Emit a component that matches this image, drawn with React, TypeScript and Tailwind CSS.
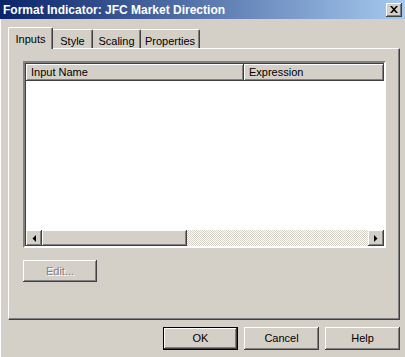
import React from "react";

const raised =
  "shadow-[inset_-1px_-1px_#404040,inset_1px_1px_#ffffff,inset_-2px_-2px_#808080,inset_2px_2px_#d4d0c8]";

type ButtonProps = {
  label: string;
  isDefault?: boolean;
  disabled?: boolean;
  className?: string;
};

const Button: React.FC<ButtonProps> = ({ label, isDefault, disabled, className = "" }) => (
  <div
    className={`flex items-center justify-center bg-[#d4d0c8] ${raised} ${
      isDefault ? "border border-black" : ""
    } ${disabled ? "text-[#808080] [text-shadow:1px_1px_#ffffff]" : "text-black"} ${className}`}
  >
    {label}
  </div>
);

const tabs = [
  { label: "Inputs", width: "w-[45px]", active: true },
  { label: "Style", width: "w-[40px]", active: false },
  { label: "Scaling", width: "w-[48px]", active: false },
  { label: "Properties", width: "w-[59px]", active: false },
];

const Arrow: React.FC<{ dir: "left" | "right" }> = ({ dir }) => (
  <svg width="4" height="7" viewBox="0 0 4 7">
    {dir === "left" ? <polygon points="4,0 4,7 0.5,3.5" fill="#000" /> : <polygon points="0,0 0,7 3.5,3.5" fill="#000" />}
  </svg>
);

const App: React.FC = () => {
  return (
    <div className="w-[405px] h-[357px] bg-[#d4d0c8] flex flex-col overflow-hidden text-[11px] font-['Liberation_Sans',Arial,sans-serif] text-black">
      {/* Title bar */}
      <div className="h-[19px] flex items-center justify-between bg-[linear-gradient(to_right,#0a246a,#a6caf0)] pl-[3px] pr-[3px]">
        <span className="text-white font-bold text-[12px] leading-none">
          Format Indicator: JFC Market Direction
        </span>
        <div className={`w-[16px] h-[14px] bg-[#d4d0c8] flex items-center justify-center ${raised}`}>
          <svg width="8" height="7" viewBox="0 0 8 7">
            <path d="M0 0 L2 0 L4 2.2 L6 0 L8 0 L5 3.5 L8 7 L6 7 L4 4.8 L2 7 L0 7 L3 3.5 Z" fill="#000" />
          </svg>
        </div>
      </div>

      <div className="flex-1 flex flex-col border-l border-white">
        {/* Tabs */}
        <div className="flex items-end h-[21px] mt-[8px] ml-[7px] relative z-10">
          {tabs.map((t) =>
            t.active ? (
              <div
                key={t.label}
                className={`${t.width} h-[22px] -mb-[1px] bg-[#d4d0c8] border-l border-t border-white border-r border-r-[#404040] rounded-t-[2px] shadow-[inset_-1px_0_#808080] flex items-start justify-center pt-[3px]`}
              >
                {t.label}
              </div>
            ) : (
              <div
                key={t.label}
                className={`${t.width} h-[19px] bg-[#d4d0c8] border-t border-white border-r border-r-[#404040] shadow-[inset_-1px_0_#808080] rounded-tr-[2px] flex items-start justify-center pt-[3px]`}
              >
                {t.label}
              </div>
            )
          )}
        </div>

        {/* Tab panel */}
        <div className="ml-[7px] w-[392px] h-[272px] border-l border-t border-white border-r border-b border-r-[#404040] border-b-[#404040] shadow-[inset_-1px_-1px_#808080] pt-[12px] pl-[14px]">
          {/* List view */}
          <div className="w-[363px] h-[187px] flex flex-col border-2 border-t-[#808080] border-l-[#808080] border-r-white border-b-white">
            <div className="flex-1 flex flex-col border-t border-l border-[#404040]">
              <div className="flex h-[17px] shrink-0">
                <div className={`w-[218px] h-full flex items-center pl-[5px] ${raised}`}>Input Name</div>
                <div className={`flex-1 h-full flex items-center pl-[5px] ${raised}`}>Expression</div>
              </div>
              <div className="flex-1 bg-white" />
              <div className="h-[16px] flex shrink-0">
                <div className={`w-[16px] h-full flex items-center justify-center bg-[#d4d0c8] ${raised}`}>
                  <Arrow dir="left" />
                </div>
                <div className={`w-[145px] h-full bg-[#d4d0c8] ${raised}`} />
                <div className="flex-1 h-full bg-[repeating-conic-gradient(#d4d0c8_0%_25%,#ffffff_0%_50%)] bg-[length:2px_2px]" />
                <div className={`w-[16px] h-full flex items-center justify-center bg-[#d4d0c8] ${raised}`}>
                  <Arrow dir="right" />
                </div>
              </div>
            </div>
          </div>

          <Button label="Edit..." disabled className="w-[74px] h-[22px] mt-[12px]" />
        </div>

        {/* Dialog buttons */}
        <div className="flex justify-end gap-[6px] mt-[7px] pr-[5px]">
          <Button label="OK" isDefault className="w-[75px] h-[23px]" />
          <Button label="Cancel" className="w-[75px] h-[23px]" />
          <Button label="Help" className="w-[75px] h-[23px]" />
        </div>
      </div>
    </div>
  );
};

export default App;
